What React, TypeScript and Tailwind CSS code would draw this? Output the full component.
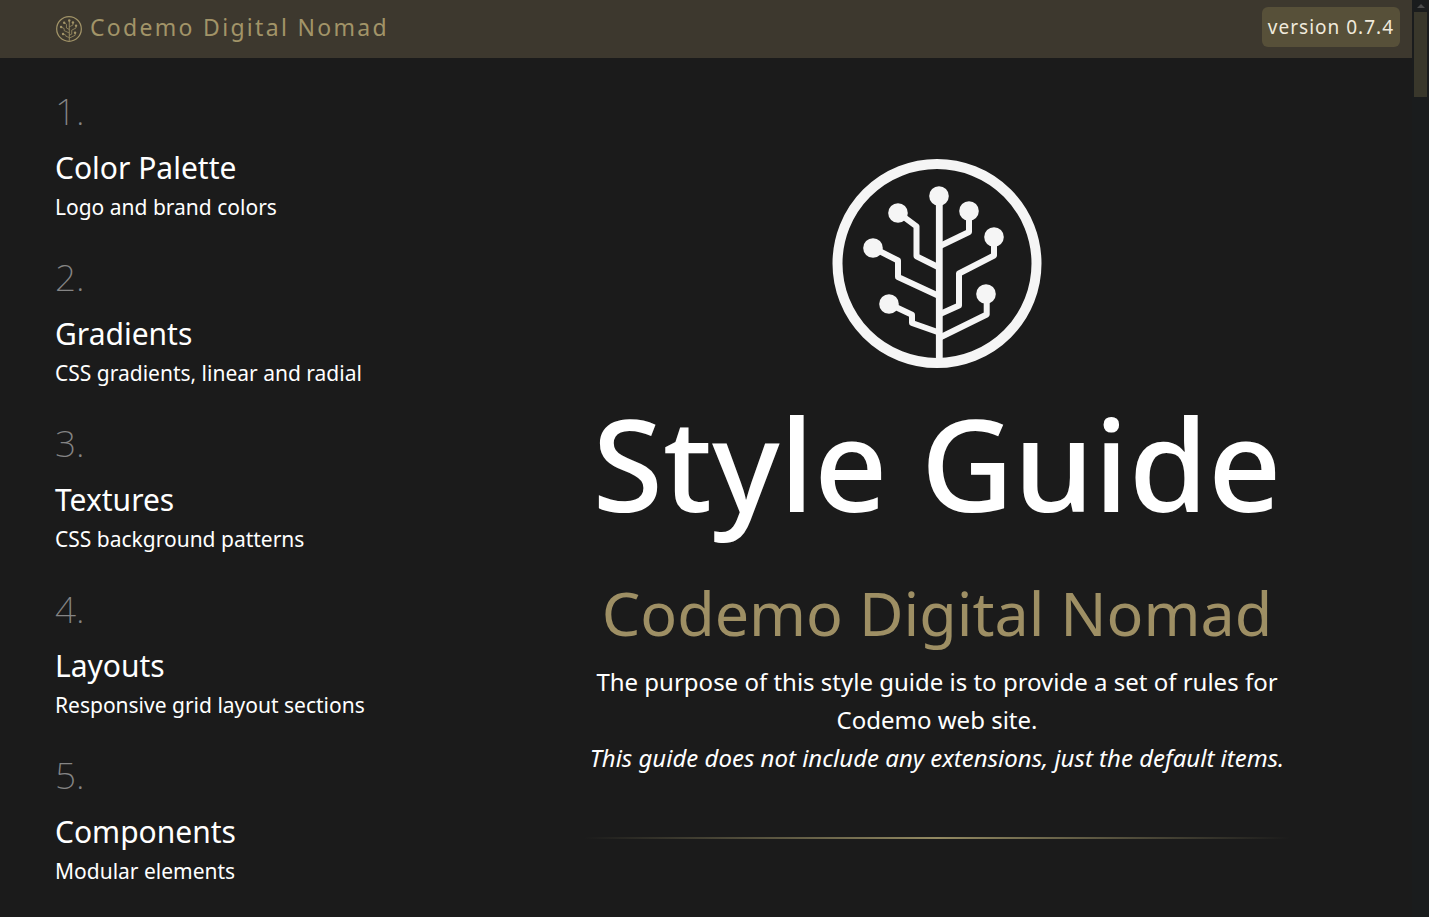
const sections = [
  { title: "Color Palette", text: "Logo and brand colors" },
  { title: "Gradients", text: "CSS gradients, linear and radial" },
  { title: "Textures", text: "CSS background patterns" },
  { title: "Layouts", text: "Responsive grid layout sections" },
  { title: "Components", text: "Modular elements" },
];

const nodes = [
  [107, 37],
  [66, 54],
  [137, 52],
  [162, 78],
  [41, 89],
  [154, 135],
  [57, 145],
];

function Logo({ className }: { className: string }) {
  return (
    <svg viewBox="0 0 210 210" className={className} aria-hidden="true">
      <circle cx="105" cy="104.5" r="99.5" fill="none" stroke="currentColor" strokeWidth="10" />
      <g fill="none" stroke="currentColor" strokeWidth="6" strokeLinejoin="round">
        <path d="M107.3 37V200" strokeWidth="6.8" />
        <path d="M66 53.7L84.5 67.3V97.3L107 108.5" />
        <path d="M41.3 89L66 101.5V118L107 137" />
        <path d="M56.7 144.7L80 155.7V164L107 173.5" />
        <path d="M137 52V73L107 87.5" />
        <path d="M162 78V96.5L127 114.5V146.5L107 155.5" />
        <path d="M154.7 135V155.5L107 179" />
      </g>
      {nodes.map(([x, y]) => (
        <circle key={`${x}-${y}`} cx={x} cy={y} r="9.8" fill="currentColor" />
      ))}
    </svg>
  );
}

export default function App() {
  return (
    <div className="flex min-h-screen bg-[#1b1b1b] font-['Noto_Sans',sans-serif] text-white">
      <div className="min-w-0 flex-1">
        <header className="flex h-[58px] items-center justify-between bg-[#3d382e] pr-3 pb-1 pl-14">
          <a href="#top" className="flex items-center gap-2 text-[23px] tracking-widest text-[#a29468]">
            <Logo className="mt-1 size-[26px]" />
            Codemo Digital Nomad
          </a>
          <span className="rounded-md bg-[#575039] px-1.5 py-1.5 text-[19px] leading-7 tracking-[1px] text-[#f0eadc]">
            version 0.7.4
          </span>
        </header>
        <div className="grid grid-cols-[minmax(0,584fr)_minmax(0,706fr)_minmax(0,122fr)]">
          <nav className="pt-[26px] pl-[55px]" aria-label="Sections">
            <ol>
              {sections.map((section, index) => (
                <li key={section.title} className="h-[166px]">
                  <a href={`#section-${index + 1}`} className="block">
                    <span className="block text-[37px] leading-[54px] font-extralight text-[#858585]">{index + 1}.</span>
                    <span className="mt-1.5 block text-[30px] leading-12">{section.title}</span>
                    <span className="block text-[21px] leading-[30px]">{section.text}</span>
                  </a>
                </li>
              ))}
            </ol>
          </nav>
          <main id="top" className="flex flex-col items-center pt-[101px] text-center">
            <Logo className="size-[210px] text-[#f5f5f5]" />
            <h1 className="mt-[22px] text-[128px] leading-[144px] font-medium whitespace-nowrap">Style Guide</h1>
            <h2 className="mt-[38px] text-[61px] leading-[80px] whitespace-nowrap text-[#9e8f64]">Codemo Digital Nomad</h2>
            <p className="mt-[10px] text-2xl leading-[38px]">
              The purpose of this style guide is to provide a set of rules for Codemo web site.
              <br />
              <em className="whitespace-nowrap">This guide does not include any extensions, just the default items.</em>
            </p>
            <hr className="mt-[60px] h-0.5 w-full border-0 bg-linear-to-r from-transparent via-[#938a62] to-transparent" />
          </main>
        </div>
      </div>
      <div className="flex w-[17px] shrink-0 flex-col items-center bg-[#1a1c1d]" aria-hidden="true">
        <svg viewBox="0 0 8 4" className="my-1 h-1 w-2 text-[#4b4b4b]">
          <path d="M0 4L4 0L8 4Z" fill="currentColor" />
        </svg>
        <div className="h-[85px] w-[13px] bg-[#39372b]" />
      </div>
    </div>
  );
}
